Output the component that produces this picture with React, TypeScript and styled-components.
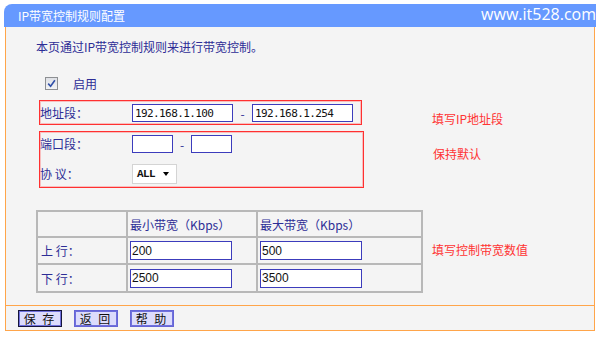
import { Fragment } from 'react';
import styled, { createGlobalStyle } from 'styled-components';

const GlobalStyle = createGlobalStyle`
  html, body {
    margin: 0;
    padding: 0;
    background: #fff;
  }
  body {
    font-family: "Noto Sans CJK SC", "Noto Sans", sans-serif;
    font-size: 12px;
  }
`;

const Frame = styled.div`
  width: 592px;
  margin: 4px 0 0 4px;
`;

const TitleBar = styled.div`
  height: 23px;
  background: #6699ff;
  border-top-left-radius: 8px;
  display: flex;
  align-items: center;
  justify-content: space-between;
  color: #fff;
`;

const Title = styled.span`
  padding-left: 14px;
  font-size: 12px;
  line-height: 23px;
`;

const Watermark = styled.span`
  font-family: "Open Sans", sans-serif;
  font-size: 16px;
  line-height: 20px;
  margin-top: -3px;
`;

const Sheet = styled.div`
  margin: 0 1px;
  border: 1px solid #ffa54a;
  border-top: none;
  background: #f4f4f4;
`;

const Main = styled.div`
  padding: 13px 0 12px 30px;
  border-bottom: 1px solid #ffa54a;
`;

const Intro = styled.div`
  line-height: 14px;
  color: #2d2d96;
`;

const EnableRow = styled.label`
  display: flex;
  align-items: center;
  gap: 15px;
  height: 16px;
  margin: 21px 0 0 9px;
  color: #2d2d96;
`;

const CheckBox = styled.span`
  width: 13px;
  height: 13px;
  box-sizing: border-box;
  border: 1px solid #8d8f92;
  background: linear-gradient(#dfe1e6, #f2f3f5);
  display: flex;
  align-items: center;
  justify-content: center;
`;

const Section = styled.div<{ $top: number }>`
  display: flex;
  align-items: flex-start;
  margin-top: ${p => p.$top}px;
`;

const RedBox = styled.div<{ $w: number; $pad: string }>`
  width: ${p => p.$w}px;
  box-sizing: border-box;
  margin-left: 3px;
  border: 1px solid #ff3030;
  box-shadow: inset 0 0 0 1px rgba(255, 90, 90, 0.35);
  padding: ${p => p.$pad};
  display: flex;
  flex-direction: column;
`;

const FieldRow = styled.div<{ $h: number; $top?: number }>`
  display: flex;
  align-items: center;
  height: ${p => p.$h}px;
  margin-top: ${p => p.$top ?? 0}px;
`;

const Label = styled.span`
  width: 92px;
  color: #2d2d96;
  line-height: 16px;
  white-space: pre;
`;

const TextBox = styled.input<{ $w: number; $h?: number; $mono?: boolean }>`
  width: ${p => p.$w}px;
  height: ${p => p.$h ?? 18}px;
  box-sizing: border-box;
  margin: 0;
  border: 1px solid #3c3cbc;
  background: #fff;
  padding: 0 0 0 ${p => (p.$mono ? 2 : 1)}px;
  font-family: ${p => (p.$mono ? '"DejaVu Sans Mono", monospace' : '"Liberation Sans", Arial, sans-serif')};
  font-size: ${p => (p.$mono ? 11 : 12)}px;
  letter-spacing: ${p => (p.$mono ? -0.6 : 0)}px;
  color: #111;
  outline: none;
`;

const Dash = styled.span<{ $w: number }>`
  width: ${p => p.$w}px;
  text-align: center;
  color: #2d2d96;
`;

const SelectBox = styled.div`
  width: 45px;
  height: 20px;
  box-sizing: border-box;
  border: 1px solid #d4d4d4;
  background: #fff;
  display: flex;
  align-items: center;
  padding-left: 4px;
  gap: 8px;
  font-family: "Liberation Mono", monospace;
  font-weight: bold;
  font-size: 11px;
  letter-spacing: -0.6px;
  color: #111;
`;

const Caret = styled.span`
  width: 0;
  height: 0;
  border-left: 3px solid transparent;
  border-right: 3px solid transparent;
  border-top: 4px solid #000;
`;

const Note = styled.span<{ $left: number; $top: number }>`
  margin: ${p => p.$top}px 0 0 ${p => p.$left}px;
  color: #ff3333;
  line-height: 14px;
  white-space: nowrap;
`;

const Grid = styled.div`
  display: grid;
  grid-template-columns: 88px 128px 163px;
  grid-template-rows: 24px 25px 26px;
  gap: 2px;
  padding: 2px;
  background: #b8b8b8;
  width: max-content;
`;

const Cell = styled.div<{ $pad?: number }>`
  background: #f4f4f4;
  display: flex;
  align-items: center;
  padding-left: ${p => p.$pad ?? 2}px;
  color: #2d2d96;
  white-space: pre;
`;

const Footer = styled.div`
  height: 24px;
  box-sizing: border-box;
  padding: 4px 0 0 12px;
  display: flex;
  align-items: flex-start;
  gap: 12px;
`;

const Button = styled.button<{ $active?: boolean }>`
  width: 44px;
  height: 17px;
  box-sizing: border-box;
  margin: 0;
  padding: 0;
  border: 1px solid ${p => (p.$active ? '#16163a' : '#6565d6')};
  box-shadow: inset 0 0 0 1px #7070dc;
  background: #dcdcfc;
  font-family: "Noto Sans CJK SC", sans-serif;
  font-size: 12px;
  line-height: 13px;
  letter-spacing: 2px;
  color: #111;
  white-space: pre;
  cursor: pointer;
`;

const CheckMark = () => (
  <svg width="9" height="9" viewBox="0 0 9 9">
    <path d="M1.2 4.6 L3.6 7.2 L7.9 1.2" fill="none" stroke="#2f4fa8" strokeWidth="1.6" />
  </svg>
);

const bandwidth = [
  { dir: '上 行：', min: '200', max: '500' },
  { dir: '下 行：', min: '2500', max: '3500' },
];

export default function App() {
  return (
    <>
      <GlobalStyle />
      <Frame>
        <TitleBar>
          <Title>IP带宽控制规则配置</Title>
          <Watermark>www.it528.com</Watermark>
        </TitleBar>
        <Sheet>
          <Main>
            <Intro>本页通过IP带宽控制规则来进行带宽控制。</Intro>
            <EnableRow>
              <CheckBox>
                <CheckMark />
              </CheckBox>
              启用
            </EnableRow>

            <Section $top={9}>
              <RedBox $w={323} $pad="3px 0 2px">
                <FieldRow $h={18}>
                  <Label>地址段：</Label>
                  <TextBox $w={101} $mono readOnly value="192.168.1.100" />
                  <Dash $w={19}>-</Dash>
                  <TextBox $w={101} $mono readOnly value="192.168.1.254" />
                </FieldRow>
              </RedBox>
              <Note $left={70} $top={12}>填写IP地址段</Note>
            </Section>

            <Section $top={5}>
              <RedBox $w={325} $pad="3px 0 3px">
                <FieldRow $h={18}>
                  <Label>端口段：</Label>
                  <TextBox $w={41} readOnly value="" />
                  <Dash $w={18}>-</Dash>
                  <TextBox $w={41} readOnly value="" />
                </FieldRow>
                <FieldRow $h={20} $top={11}>
                  <Label>协 议：</Label>
                  <SelectBox>
                    ALL
                    <Caret />
                  </SelectBox>
                </FieldRow>
              </RedBox>
              <Note $left={69} $top={16}>保持默认</Note>
            </Section>

            <Section $top={22}>
              <Grid>
                <Cell />
                <Cell>最小带宽（Kbps）</Cell>
                <Cell>最大带宽（Kbps）</Cell>
                {bandwidth.map(row => (
                  <Fragment key={row.dir}>
                    <Cell $pad={3}>{row.dir}</Cell>
                    <Cell $pad={2}>
                      <TextBox $w={102} $h={19} readOnly value={row.min} />
                    </Cell>
                    <Cell $pad={2}>
                      <TextBox $w={102} $h={19} readOnly value={row.max} />
                    </Cell>
                  </Fragment>
                ))}
              </Grid>
              <Note $left={9} $top={33}>填写控制带宽数值</Note>
            </Section>
          </Main>
          <Footer>
            <Button $active>保 存</Button>
            <Button>返 回</Button>
            <Button>帮 助</Button>
          </Footer>
        </Sheet>
      </Frame>
    </>
  );
}
